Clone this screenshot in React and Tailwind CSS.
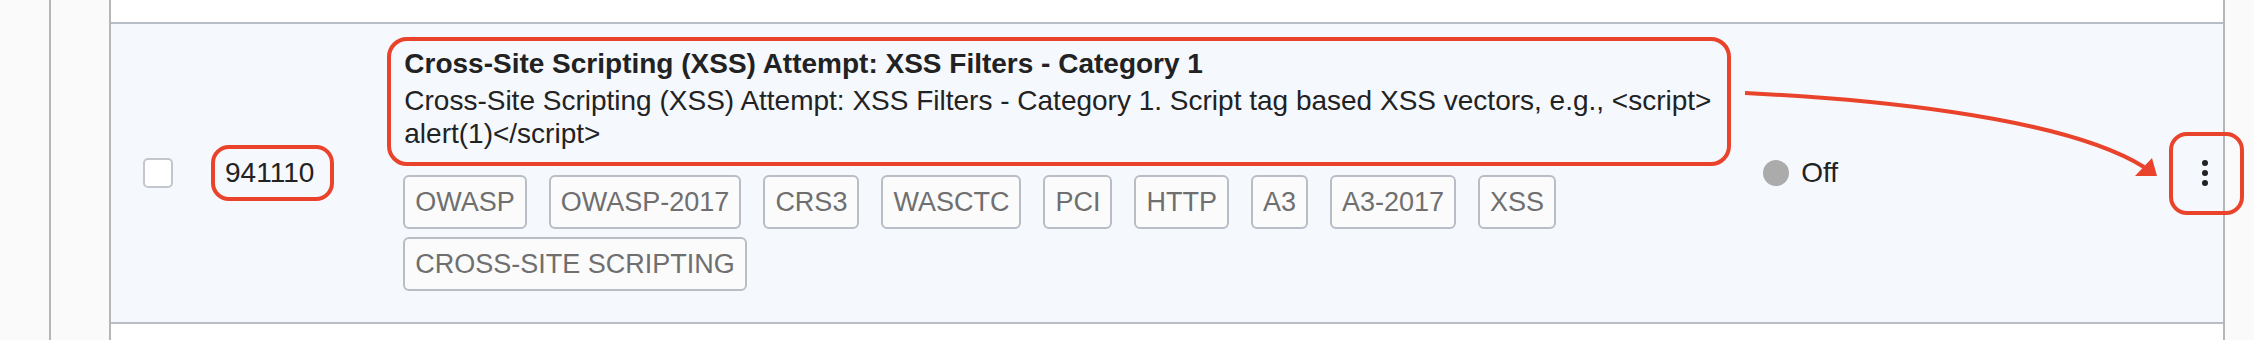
const tags = [
  'OWASP',
  'OWASP-2017',
  'CRS3',
  'WASCTC',
  'PCI',
  'HTTP',
  'A3',
  'A3-2017',
  'XSS',
  'CROSS-SITE SCRIPTING',
];

export default function App() {
  return (
    <div className="relative flex h-[340px] w-[2254px] overflow-hidden bg-[#fafafa] font-['Liberation_Sans',Arial,sans-serif] text-[#222]">
      {/* left gutters */}
      <div className="w-[51px] shrink-0 border-r-2 border-[#b4b5b7]" />
      <div className="w-[60px] shrink-0 border-r-2 border-[#b4b6ba]" />

      {/* table */}
      <div className="flex w-[2114px] shrink-0 flex-col border-r-2 border-[#b4b6ba] bg-white">
        <div className="h-[22px]" />
        <div className="flex h-[302px] items-center border-y-2 border-[#b9bec6] bg-[#f5f8fd] pl-[32px]">
          <input
            type="checkbox"
            className="h-[30px] w-[30px] shrink-0 appearance-none rounded-[5px] border-2 border-[#c3c7cd] bg-white"
          />

          {/* rule id */}
          <div className="ml-[38px] h-[56px] shrink-0 rounded-[18px] border-4 border-[#e9432b] pl-[10px] pr-[16px] text-[28px] leading-[48px]">
            941110
          </div>

          {/* name, description, tags */}
          <div className="ml-[53px] flex w-[1344px] shrink-0 flex-col self-stretch pb-[31px] pt-[13px]">
            <div className="rounded-[20px] border-4 border-[#e9432b] pb-[12px] pl-[13px] pr-[8px] pt-[6px]">
              <div className="mb-[3px] text-[28px] font-bold leading-[34px]">
                Cross-Site Scripting (XSS) Attempt: XSS Filters - Category 1
              </div>
              <div className="text-[28px] leading-[33px]">
                Cross-Site Scripting (XSS) Attempt: XSS Filters - Category 1. Script tag based XSS vectors, e.g.,{' '}
                {'<script>'} alert(1){'</script>'}
              </div>
            </div>
            <div className="mt-[9px] flex flex-wrap gap-x-[22px] gap-y-[8px] pl-[16px]">
              {tags.map(t => (
                <span
                  key={t}
                  className="flex h-[54px] items-center rounded-[6px] border-2 border-[#b9bdc5] bg-[#fbfbfc] px-[10px] text-[27px] leading-none text-[#6f6f6f]"
                >
                  {t}
                </span>
              ))}
            </div>
          </div>

          {/* status */}
          <div className="ml-[32px] flex items-center">
            <span className="h-[26px] w-[26px] rounded-full bg-[#ababab]" />
            <span className="ml-[12px] text-[28px] leading-none">Off</span>
          </div>

          {/* actions */}
          <button className="-mr-[21px] ml-auto flex h-[83px] w-[75px] shrink-0 flex-col items-center justify-center gap-[4px] rounded-[18px] border-4 border-[#e9432b] pr-[3px]">
            <span className="h-[6px] w-[6px] rounded-full bg-[#222]" />
            <span className="h-[6px] w-[6px] rounded-full bg-[#222]" />
            <span className="h-[6px] w-[6px] rounded-full bg-[#222]" />
          </button>
        </div>
      </div>

      {/* annotation arrow */}
      <svg className="pointer-events-none absolute inset-0" width="2254" height="340">
        <path
          d="M1745 93 C1850 98 2059 114 2144 167"
          fill="none"
          stroke="#e9432b"
          strokeWidth="4"
        />
        <polygon points="2157,176 2135,176 2152,158" fill="#e9432b" />
      </svg>
    </div>
  );
}
